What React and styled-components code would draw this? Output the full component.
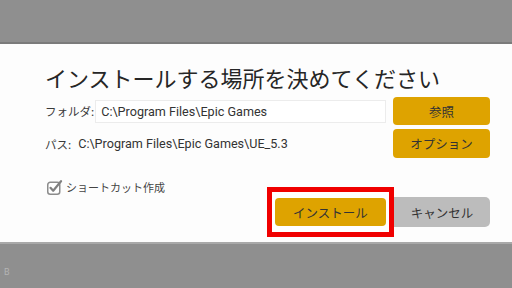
// Import: Dependencies
import React from "react";
import styled, { createGlobalStyle } from "styled-components";

// Global
const GlobalStyle = createGlobalStyle`
  html, body {
    margin: 0;
    padding: 0;
    background: #8f8f8f;
    font-family: Roboto, "Noto Sans CJK JP", sans-serif;
  }
`;

// page: InstallDialog
function App() {
  return (
    <Screen>
      <GlobalStyle />
      <TopShade />
      <Dialog>
        <Title>インストールする場所を決めてください</Title>

        <FormRow>
          <FieldLabel>フォルダ:</FieldLabel>
          <PathInput>C:\Program Files\Epic Games</PathInput>
          <GoldButton>参照</GoldButton>
        </FormRow>

        <FormRow $tall>
          <FieldLabel $gap>パス:</FieldLabel>
          <PathText>C:\Program Files\Epic Games\UE_5.3</PathText>
          <GoldButton $tall>オプション</GoldButton>
        </FormRow>

        <CheckRow>
          <CheckBox>
            <svg width="16" height="15" viewBox="0 0 16 15">
              <rect x="0.75" y="2.25" width="12" height="12" rx="2.5" fill="#fff" stroke="#8c8c8c" strokeWidth="1.5" />
              <path d="M3.5 7.8 L6.2 10.8 L14 1.2" fill="none" stroke="#808080" strokeWidth="2.2" strokeLinecap="round" strokeLinejoin="round" />
            </svg>
          </CheckBox>
          <CheckLabel>ショートカット作成</CheckLabel>
        </CheckRow>

        <ActionRow>
          <Highlight>
            <GoldButton $wide>インストール</GoldButton>
          </Highlight>
          <GreyButton>キャンセル</GreyButton>
        </ActionRow>
      </Dialog>
      <BottomShade>
        <Hint>B</Hint>
      </BottomShade>
    </Screen>
  );
}

// Export: App
export default App;

// Styled: Screen
const Screen = styled.div`
  width: 512px;
  height: 288px;
  display: flex;
  flex-direction: column;
  overflow: hidden;
`;

// Styled: TopShade
const TopShade = styled.div`
  height: 42px;
  flex-shrink: 0;
  background: #8f8f8f;
  border-bottom: 2px solid #7b7b7b;
`;

// Styled: Dialog
const Dialog = styled.div`
  height: 198px;
  flex-shrink: 0;
  background: #fdfdfd;
  display: flex;
  flex-direction: column;
  padding: 0 22px 0 45px;
  box-sizing: border-box;
`;

// Styled: Title
const Title = styled.h1`
  margin: 15px 0 0;
  height: 38px;
  font-family: "Noto Sans CJK JP", sans-serif;
  font-weight: 400;
  font-size: 22px;
  line-height: 36px;
  color: #262626;
  white-space: nowrap;
`;

// Styled: FormRow
const FormRow = styled.div`
  display: flex;
  align-items: center;
  height: ${(props) => (props.$tall ? "29px" : "28px")};
  margin-bottom: ${(props) => (props.$tall ? "0" : "4px")};
`;

// Styled: FieldLabel
const FieldLabel = styled.span`
  font-family: "Noto Sans CJK JP", sans-serif;
  font-size: 11.5px;
  color: #3a3a3a;
  margin-right: ${(props) => (props.$gap ? "7px" : "1px")};
  white-space: nowrap;
`;

// Styled: PathInput
const PathInput = styled.div`
  width: 291px;
  height: 23px;
  box-sizing: border-box;
  border: 1px solid #ececec;
  background: #fff;
  padding-left: 5px;
  display: flex;
  align-items: center;
  font-size: 12.6px;
  color: #333;
  margin-right: 5px;
  white-space: nowrap;
`;

// Styled: PathText
const PathText = styled.span`
  flex: 1;
  font-size: 12.6px;
  color: #333;
  white-space: nowrap;
`;

// Styled: GoldButton
const GoldButton = styled.div`
  width: ${(props) => (props.$wide ? "111px" : "97px")};
  height: ${(props) => (props.$tall ? "29px" : "28px")};
  background: #dea300;
  border-radius: 4px;
  display: flex;
  align-items: center;
  justify-content: center;
  font-family: "Noto Sans CJK JP", sans-serif;
  font-size: 12.5px;
  color: #333;
  margin-left: auto;
  white-space: nowrap;
`;

// Styled: CheckRow
const CheckRow = styled.div`
  display: flex;
  align-items: center;
  height: 16px;
  margin-top: 21px;
  padding-left: 2px;
`;

// Styled: CheckBox
const CheckBox = styled.span`
  display: flex;
  margin-right: 3px;
`;

// Styled: CheckLabel
const CheckLabel = styled.span`
  font-family: "Noto Sans CJK JP", sans-serif;
  font-size: 11px;
  color: #444;
`;

// Styled: ActionRow
const ActionRow = styled.div`
  display: flex;
  align-items: center;
  margin-top: -8px;
  margin-left: 222px;
`;

// Styled: Highlight
const Highlight = styled.div`
  border: 5px solid #f00000;
  padding: 6px 3px;
  background: #fff;
  position: relative;
  z-index: 1;
`;

// Styled: GreyButton
const GreyButton = styled.div`
  width: 100px;
  height: 30px;
  margin-left: -4px;
  background: #bcbcbc;
  border-radius: 0 5px 5px 0;
  display: flex;
  align-items: center;
  justify-content: center;
  padding-left: 4px;
  box-sizing: border-box;
  font-family: "Noto Sans CJK JP", sans-serif;
  font-size: 12.5px;
  color: #333;
`;

// Styled: BottomShade
const BottomShade = styled.div`
  flex: 1;
  background: #8f8f8f;
  border-top: 2px solid #a9a9a9;
  padding: 16px 0 0 4px;
`;

// Styled: Hint
const Hint = styled.span`
  font-size: 9px;
  color: #b4b4b4;
`;
